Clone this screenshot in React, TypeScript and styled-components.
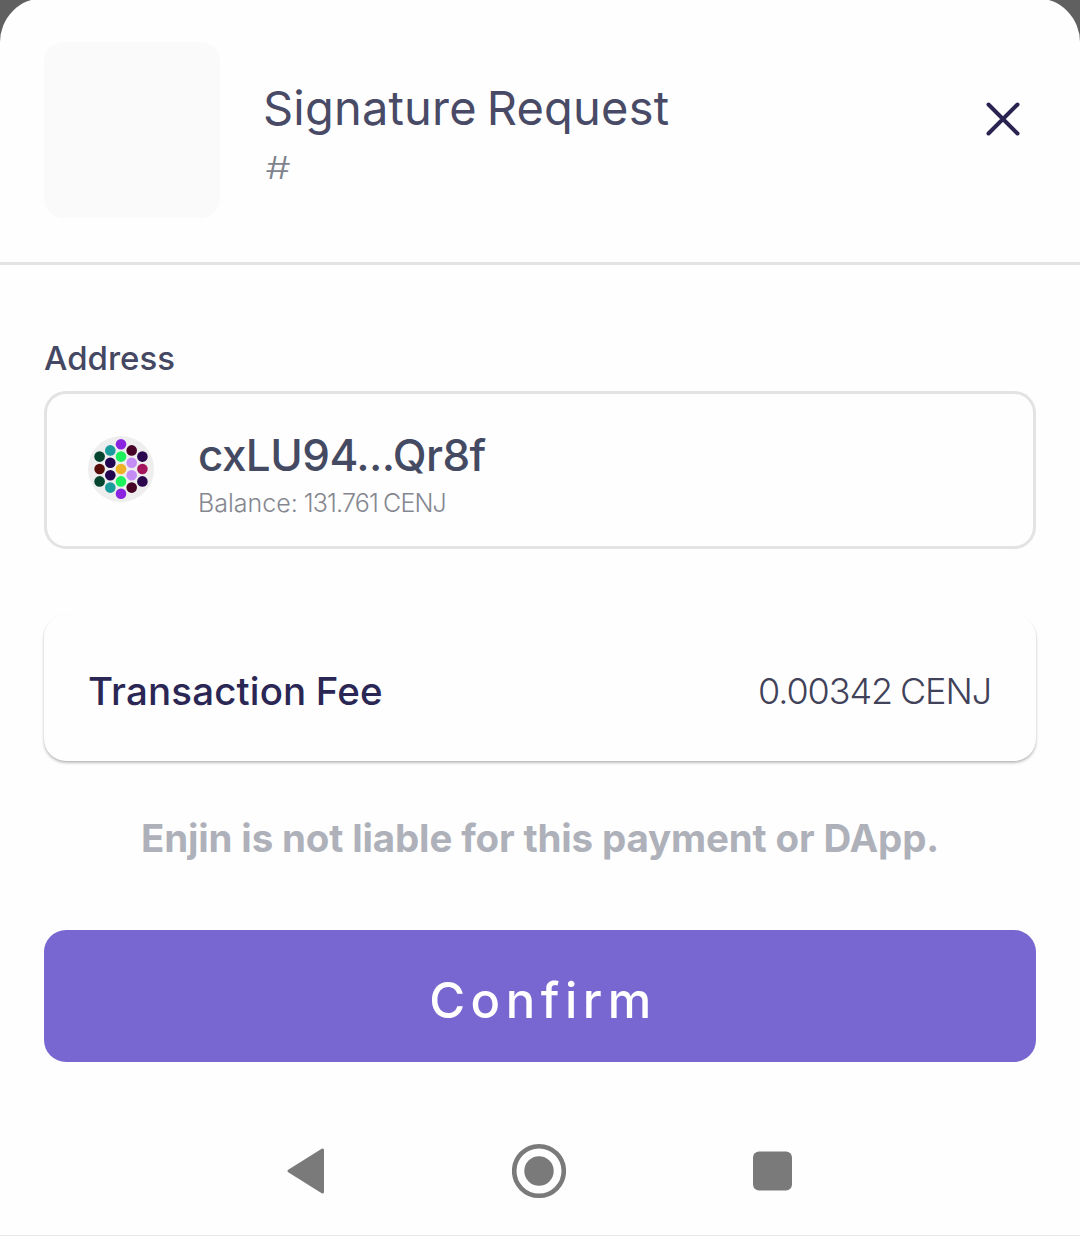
import React from "react";
import styled, { createGlobalStyle } from "styled-components";

const GlobalStyle = createGlobalStyle`
  * { box-sizing: border-box; }
  body {
    margin: 0;
    background: #606060;
    font-family: Inter, "Open Sans", sans-serif;
    overflow: hidden;
  }
`;

const Screen = styled.div`
  height: 1236px;
  overflow: hidden;
  background: #606060;
`;

const Sheet = styled.main`
  display: flex;
  flex-direction: column;
  height: 1238px;
  margin-top: -2px;
  background: #fefefe;
  border-radius: 44px 44px 0 0;
  border-bottom: 1px solid #e6e6e6;
`;

const Header = styled.header`
  display: flex;
  align-items: flex-start;
  height: 267px;
  padding: 44px 44px 0;
  border-bottom: 3px solid #e3e3e5;
`;

const AppIcon = styled.div`
  width: 176px;
  height: 176px;
  border-radius: 20px;
  background: #fafafa;
`;

const Heading = styled.div`
  flex: 1;
  display: flex;
  flex-direction: column;
  padding: 35px 0 0 43px;
`;

interface TextProps {
  $size: number;
  $line: number;
  $color: string;
  $weight?: number;
  $tracking?: number;
  $gap?: number;
}

const Text = styled.span<TextProps>`
  display: block;
  margin: 0;
  white-space: nowrap;
  font-size: ${(p) => p.$size}px;
  line-height: ${(p) => p.$line}px;
  color: ${(p) => p.$color};
  font-weight: ${(p) => p.$weight ?? 400};
  letter-spacing: ${(p) => p.$tracking ?? 0}px;
  word-spacing: ${(p) => p.$gap ?? 0}px;
`;

const HashText = styled(Text)`
  width: max-content;
  padding-left: 2px;
  transform: scaleX(1.28);
  transform-origin: left center;
`;

const Figures = styled.span`
  letter-spacing: -0.85px;
`;

const CloseButton = styled.button`
  display: flex;
  width: 66px;
  height: 66px;
  margin: 44px 0 0;
  padding: 0;
  border: 0;
  background: none;
`;

const Content = styled.section`
  display: flex;
  flex-direction: column;
  padding: 72px 44px 0;
`;

const AddressCard = styled.div`
  display: flex;
  align-items: center;
  height: 158px;
  margin-top: 12px;
  padding: 0 41px;
  border: 3px solid #e3e3e5;
  border-radius: 22px;
`;

const AddressLines = styled.div`
  display: flex;
  flex-direction: column;
  height: 88px;
  padding-left: 44px;
`;

const FeeCard = styled.div`
  display: flex;
  align-items: center;
  justify-content: space-between;
  height: 146px;
  margin-top: 66px;
  padding: 6px 45px 0 44px;
  border-radius: 22px;
  background: #fefefe;
  box-shadow: 0 2px 3px rgba(0, 0, 0, 0.24), 0 1px 2px rgba(0, 0, 0, 0.06);
`;

const Notice = styled.p`
  display: flex;
  justify-content: center;
  margin: 52px 0 0;
`;

const ConfirmButton = styled.button`
  display: flex;
  align-items: center;
  justify-content: center;
  height: 132px;
  margin-top: 67px;
  padding: 9px 0 0 6px;
  border: 0;
  border-radius: 22px;
  background: #7866d1;
  font-family: inherit;
`;

const NavBar = styled.nav`
  display: flex;
  align-items: center;
  justify-content: space-between;
  height: 56px;
  margin-top: 81px;
  padding: 0 287px;
`;

const IdenticonSvg = styled.svg`
  margin-bottom: 2px;
`;

const dots: [number, number, string][] = [
  [0, -2, "#8a24e0"], [0, -1, "#1cf05a"], [0, 0, "#efb226"], [0, 1, "#1cf05a"], [0, 2, "#8a24e0"],
  [-1, -1.5, "#1a9c9c"], [-1, -0.5, "#22034f"], [-1, 0.5, "#22034f"], [-1, 1.5, "#1a9c9c"],
  [1, -1.5, "#470428"], [1, -0.5, "#c48cf5"], [1, 0.5, "#c48cf5"], [1, 1.5, "#470428"],
  [-2, -1, "#05452f"], [-2, 0, "#560c08"], [-2, 1, "#05452f"],
  [2, -1, "#2b064f"], [2, 0, "#a3155f"], [2, 1, "#2b064f"],
];

function Identicon() {
  return (
    <IdenticonSvg width="66" height="66" viewBox="-33 -33 66 66">
      <circle r="33" fill="#eeeeee" />
      {dots.map(([col, row, fill], i) => (
        <circle key={i} cx={col * 10.7} cy={row * 12.4} r="5.3" fill={fill} />
      ))}
    </IdenticonSvg>
  );
}

export default function App() {
  return (
    <Screen>
      <GlobalStyle />
      <Sheet>
        <Header>
          <AppIcon />
          <Heading>
            <Text as="h1" $size={47} $line={61} $color="#484a66" $weight={400} $tracking={0.2} $gap={-3.5}>
              Signature Request
            </Text>
            <HashText $size={31} $line={60} $color="#7f848d" $weight={300}>#</HashText>
          </Heading>
          <CloseButton aria-label="Close">
            <svg width="66" height="66" viewBox="0 0 66 66" fill="none" stroke="#292351" strokeWidth="4" strokeLinecap="round">
              <path d="M18.5 18.5 47.5 47.5M47.5 18.5 18.5 47.5" />
            </svg>
          </CloseButton>
        </Header>
        <Content>
          <Text $size={33} $line={42} $color="#454862" $weight={500}>Address</Text>
          <AddressCard>
            <Identicon />
            <AddressLines>
              <Text $size={44} $line={58} $color="#454a63" $weight={500} $tracking={-0.55}>cxLU94...Qr8f</Text>
              <Text $size={25} $line={38} $color="#858790" $weight={300} $gap={-1}>
                Balance: <Figures>131.761 CENJ</Figures>
              </Text>
            </AddressLines>
          </AddressCard>
          <FeeCard>
            <Text $size={38.5} $line={52} $color="#2b2755" $weight={500} $tracking={0.15} $gap={-1}>Transaction Fee</Text>
            <Text $size={36} $line={52} $color="#414259" $weight={300} $tracking={-1.1} $gap={-1}>0.00342 CENJ</Text>
          </FeeCard>
          <Notice>
            <Text $size={38.5} $line={50} $color="#aeb1b9" $weight={700} $tracking={-0.15}>
              Enjin is not liable for this payment or DApp.
            </Text>
          </Notice>
          <ConfirmButton>
            <Text $size={49} $line={60} $color="#ffffff" $weight={500} $tracking={5.5}>Confirm</Text>
          </ConfirmButton>
        </Content>
        <NavBar>
          <svg width="38" height="48" viewBox="0 0 38 48">
            <path d="M2 24 35.5 3V45Z" fill="#7a7a7a" stroke="#7a7a7a" strokeWidth="3" strokeLinejoin="round" />
          </svg>
          <svg width="54" height="56" viewBox="0 0 54 56">
            <circle cx="27" cy="28" r="24.8" fill="none" stroke="#7a7a7a" strokeWidth="4.6" />
            <circle cx="27" cy="28" r="14.7" fill="#7a7a7a" />
          </svg>
          <svg width="40" height="40" viewBox="0 0 40 40">
            <rect x="0" y="0.5" width="39" height="39" rx="6" fill="#7a7a7a" />
          </svg>
        </NavBar>
      </Sheet>
    </Screen>
  );
}
